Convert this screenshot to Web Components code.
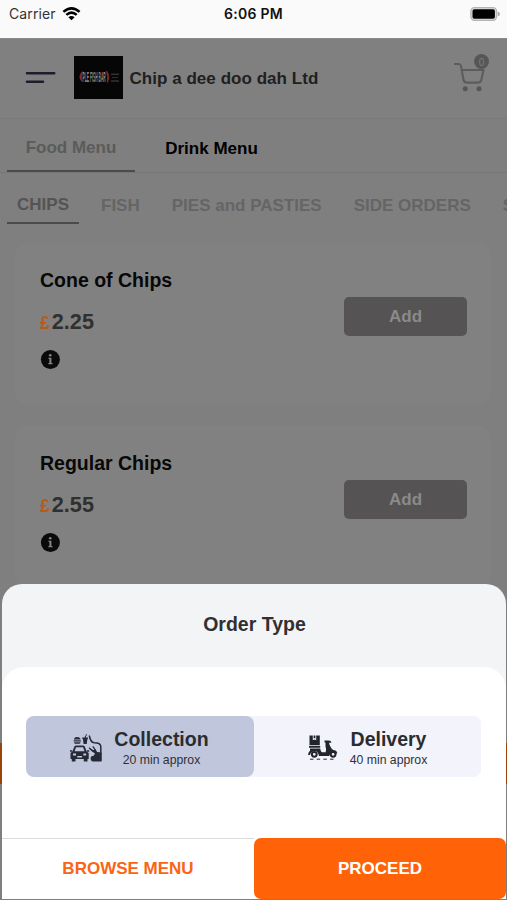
<!DOCTYPE html>
<html lang="en">
<head>
<meta charset="utf-8">
<title>Chip a dee doo dah Ltd</title>
<style>
html,body{margin:0;height:900px;overflow:hidden;background:#808080;font-family:"Liberation Sans",Arial,sans-serif}
</style>
</head>
<body>
<menu-app></menu-app>
<script>
const define = (name, html) => {
  const t = document.createElement('template');
  t.innerHTML = html;
  customElements.define(name, class extends HTMLElement {
    constructor() {
      super();
      this.attachShadow({mode: 'open'}).appendChild(t.content.cloneNode(true));
    }
  });
};

define('status-bar', `<style>
:host{display:grid;grid-template-columns:1fr auto 1fr;height:38px;box-sizing:border-box;padding:0 7px 11px 9px;align-items:center;background:#fafafa;color:#111;font-family:Inter,sans-serif;font-size:14px}
.l{display:flex;align-items:center;gap:6px;color:#333;letter-spacing:.12px}
b{font-weight:600;letter-spacing:.3px;color:#111;margin-left:-2px}
.bat{justify-self:end;display:block}
</style>
<div class="l"><span>Carrier</span>
<svg width="19" height="14" viewBox="0 0 18 14" fill="none" stroke="#000" stroke-width="2.5"><path d="M.9 4.9Q9-2.2 17.1 4.9M3.8 7.9Q9 3.3 14.2 7.9"/><path d="M5.9 10.2Q9 7.6 12.1 10.2L9 13.3Z" fill="#000" stroke="none"/></svg></div>
<b>6:06 PM</b>
<svg class="bat" width="30" height="14" viewBox="0 0 30 14"><rect x=".9" y=".7" width="25.6" height="12.6" rx="3.5" fill="#ddd" stroke="#b4b4b4" stroke-width="1.3"/><rect x="2.5" y="2.3" width="22.4" height="9.4" rx="1.8" fill="#000"/><path d="M27.7 4.6Q30 5.3 30 7T27.7 9.4Z" fill="#aaa"/></svg>`);

define('cart-button', `<style>
:host{display:block;position:relative;width:36px;height:40px}
svg{display:block}
span{position:absolute;left:20px;top:0;width:15px;height:15px;border-radius:50%;background:#565656;color:#7d7d7d;font:10px/17px "Liberation Sans",sans-serif;text-align:center}
</style>
<svg width="36" height="40" viewBox="0 0 36 40" fill="none" stroke="#5c5c5c" stroke-width="2.1" stroke-linecap="round" stroke-linejoin="round"><path d="M1 10H5Q6.5 10 7 12L9.3 25Q9.8 28.6 13 28.6H24Q26.7 28.6 27.3 26L29.5 16H7.8"/><g fill="#565656" stroke="none"><circle cx="11.3" cy="34.8" r="2.5"/><circle cx="25" cy="34.8" r="2.5"/></g></svg><span>0</span>`);

define('shop-logo', `<style>
:host{display:flex;flex:none;width:49px;height:43px;background:#060606;align-items:center;justify-content:center;overflow:hidden}
svg{display:block}
</style>
<svg width="49" height="43" viewBox="0 0 49 43" font-family="Liberation Sans, sans-serif"><path d="M8.5 15.5Q3.5 20.5 8 25.5Q6.5 21 8.5 15.5M32.5 15Q36.5 20 33.5 26.5Q34 20.5 32.5 15" fill="#8c2b2b" stroke="#8c2b2b" stroke-width=".8"/><text transform="translate(8.5 26) scale(1 4.2)" font-size="3.35" font-weight="700" fill="#8a8a8a">PLE FISH BAR</text><g fill="#303030"><rect x="37" y="17.5" width="8" height="1.6"/><rect x="38" y="21" width="6" height="1"/><rect x="37" y="24.2" width="8" height="1.6"/></g></svg>`);

define('shop-header', `<style>
:host{display:flex;height:81px;box-sizing:border-box;align-items:center;padding:0 17px 2px 25px;background:#808080;border-top:1px solid #8a8a8a;border-bottom:1px solid #7a7a7a}
.burger{width:31px;margin-right:18px;display:block;flex:none}
h1{margin:0 0 0 6.5px;flex:1;font-size:17px;letter-spacing:.04px;font-weight:700;color:#202020;line-height:22px;padding-top:2px}
cart-button{margin-top:-7px}
</style>
<svg class="burger" width="31" height="14" viewBox="0 0 31 14" stroke="#1c1f2b" stroke-width="2.6" stroke-linecap="round"><path d="M2 2.2H29.2M2 10.7H18"/></svg>
<shop-logo></shop-logo><h1>Chip a dee doo dah Ltd</h1><cart-button></cart-button>`);

define('menu-tabs', `<style>
:host{display:flex;height:54px;box-sizing:border-box;padding-left:7px;border-bottom:1px solid #757575;font-size:17px;font-weight:700;line-height:20px}
div{box-sizing:border-box;height:53px;width:128px;text-align:center;padding-top:19px;color:#5b5b5b;border-bottom:2px solid #4b4b4b}
div+div{width:153px;padding-top:20px;color:#000;border:0}
</style><div>Food Menu</div><div>Drink Menu</div>`);

define('category-tabs', `<style>
:host{display:flex;height:70px;box-sizing:border-box;padding:0 0 0 7px;overflow:hidden;white-space:nowrap;font-size:17px;font-weight:700;line-height:20px;color:#656565;gap:32px}
span{flex:none;padding-top:23px}
.on{box-sizing:border-box;height:51px;width:72px;padding-top:22px;margin-right:-10px;text-align:center;color:#545454;border-bottom:2px solid #4b4b4b}
</style><span class="on">CHIPS</span><span>FISH</span><span>PIES and PASTIES</span><span>SIDE ORDERS</span><span>S</span>`);

define('menu-item', `<style>
:host{display:flex;height:161px;box-sizing:border-box;margin:0 16px 22px 15px;padding:0 24px 0 25px;border-radius:12px;background:#818181;justify-content:space-between}
.info{display:flex;flex-direction:column;padding-top:25px}
.name{font-size:19.5px;line-height:24px;font-weight:700;color:#080808}
.price{display:flex;align-items:baseline;margin-top:17px;font-size:21.7px;line-height:26px;font-weight:700;color:#303030}
.price i{font-style:normal;font-size:17.5px;color:#b85b16;margin-right:2px}
svg{display:block;margin-top:13px}
button{font:700 17px/20px "Liberation Sans",sans-serif;width:123px;height:39px;border:0;border-radius:5px;margin-top:54px;background:#565354;color:#8a8a8a;padding:0}
</style>
<div class="info"><div class="name"><slot name="name"></slot></div><div class="price"><i>£</i><slot name="price"></slot></div>
<svg width="21" height="21" viewBox="0 0 21 21"><circle cx="10.4" cy="10.5" r="9.5" fill="#0a0a0a"/><circle cx="10.2" cy="6.3" r="1.3" fill="#858585"/><path d="M8.5 8.8H11.4V14H12.4V15.3H8.4V14H9.4V10.1H8.5Z" fill="#858585"/></svg></div>
<button>Add</button>`);

define('collection-icon', `<style>:host,svg{display:block}</style>
<svg width="33" height="31" viewBox="0 0 33 31" fill="#262936"><path d="M4 6.5Q4 4 7 4Q10.5 4 10.5 6.5ZM3.7 7.2H10.8V8.5H3.7ZM4 9.2H10.5Q10.5 10.8 9 10.8H5.5Q4 10.8 4 9.2Z"/><path d="M12.2 4.5H18V5.7H17.5L16.7 11H13.6L12.8 5.7H12.2ZM14.5 4.5L16.3 1L17 1.3L15.7 4.5Z"/><path d="M2.4 18.5L4.4 13.5Q4.8 12.5 6 12.5H13Q14.2 12.5 14.7 13.5L16.7 18.5L18.7 20V26H17.5V28.5H13.8V26H5.5V28.5H1.8V26H.5V20ZM6 14.2L4.6 18.2H14.5L13.1 14.2ZM3 20.5V22.5H6V20.5ZM13.3 20.5V22.5H16.2V20.5ZM7.2 23V24.4H12.1V23Z" fill-rule="evenodd"/><path d="M0 17.3H2.2V18.7H0ZM17 17.3H19.2V18.7H17Z"/><path d="M19.3 2.5Q20.5 9.5 24.3 9.8Q30.5 9.8 30.8 13.5V28" fill="none" stroke="#262936" stroke-width="1.5"/><path d="M19.2 14.2L23 17L25.5 16.5L27.2 19L31.5 19.5V28.5H24Q20.6 28.5 20.6 25.4Q20.6 22.8 23.6 22.7L25 20.5L22 18.6L18.8 15.6Z"/><path d="M22.8 13.3L25.6 17.3" stroke="#262936" stroke-width="1.2"/></svg>`);

define('delivery-icon', `<style>:host,svg{display:block}</style>
<svg width="31" height="26" viewBox="0 0 31 26" fill="#23252d"><path d="M1.5 .5H4.8V5.2L6.5 4.4L8.2 5.2V.5H11.8V10.2H1.5ZM5.6 .5H7.4V3.5L6.5 3L5.6 3.5Z" fill-rule="evenodd"/><path d="M1 11H12.2V12.8H1ZM2 13.6H12.2Q12.7 17.3 14.2 17.3H17.7Q18.9 14.5 17.5 11.5V7.5H16.5V5.5H20.5Q23.3 5.5 23.3 7.8H21.2V9Q23.5 14.3 25.2 15Q29 15.2 29.3 18.5H27.2Q22.8 16.4 21.2 21H11Q9.8 15.2 5.3 16.3Q2.2 17.4 2 20H0Q.5 16.5 2 15.8Z"/><g fill="none" stroke="#23252d" stroke-width="2"><circle cx="6.3" cy="19.3" r="2.4"/><circle cx="25.1" cy="19.3" r="2.4"/></g><path d="M2 24.2H28" stroke="#23252d" stroke-width="1" stroke-dasharray="3.4 3.3"/></svg>`);

define('order-option', `<style>
:host{display:flex;flex:1;height:61px;box-sizing:border-box;align-items:center;justify-content:center;gap:11px;background:#f2f3fb;border-radius:0 8px 8px 0;padding:4px 0 0}
:host([selected]){background:#c0c6dc;border-radius:8px;padding-right:1px}
.t{text-align:center;color:#303136}
b{display:block;font-size:19.5px;line-height:23px;color:#2b2c30}
small{display:block;font-size:12.25px;line-height:17px;margin-top:1px}
</style><slot name="icon"></slot><div class="t"><b><slot></slot></b><small><slot name="time"></slot></small></div>`);

define('order-sheet', `<style>
:host{display:flex;flex-direction:column;box-sizing:border-box;background:#f3f4f6;border-radius:20px 20px 0 0;overflow:hidden}
h2{margin:0;height:83px;box-sizing:border-box;padding:27px 0 0 1px;text-align:center;font-size:19.5px;line-height:26px;color:#303033}
.body{flex:1;background:#fff;border-radius:22px 22px 0 0;display:flex;flex-direction:column;justify-content:space-between}
.options{display:flex;margin:48.5px 25px 0 24px;border-radius:8px;background:#f2f3fb}
.actions{display:flex;height:61px}
.actions div{box-sizing:border-box;flex:1;display:flex;align-items:center;justify-content:center;font-weight:700;font-size:17px;color:#f96514;border-top:1px solid #ddd}
.actions .go{background:#ff6207;color:#fff;border:0;border-radius:7px}
[slot=icon]{flex:none}
</style>
<h2>Order Type</h2>
<div class="body"><div class="options">
<order-option selected><collection-icon slot="icon"></collection-icon>Collection<span slot="time">20 min approx</span></order-option>
<order-option><delivery-icon slot="icon"></delivery-icon>Delivery<span slot="time">40 min approx</span></order-option>
</div><div class="actions"><div>BROWSE MENU</div><div class="go">PROCEED</div></div></div>`);

define('menu-app', `<style>
:host{display:block;position:relative;width:507px;height:900px;overflow:hidden;background:#7f7f7f}
.basket{position:absolute;left:0;right:0;top:743px;height:41px;background:#9a4309}
order-sheet{position:absolute;left:2px;right:1px;top:584px;height:315px}
</style>
<status-bar></status-bar><shop-header></shop-header><menu-tabs></menu-tabs><category-tabs></category-tabs>
<menu-item><span slot="name">Cone of Chips</span><span slot="price">2.25</span></menu-item>
<menu-item><span slot="name">Regular Chips</span><span slot="price">2.55</span></menu-item>
<div class="basket"></div><order-sheet></order-sheet>`);
</script>
</body>
</html>
